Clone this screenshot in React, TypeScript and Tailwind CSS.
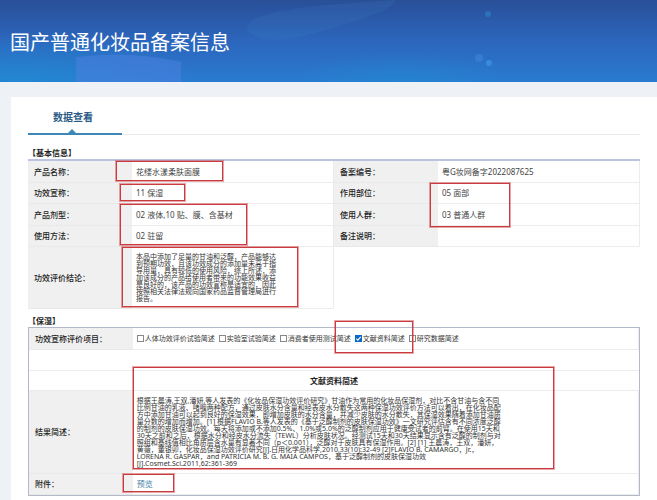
import type { ReactNode } from 'react';

interface MarkProps {
  className: string;
}

// Red annotation frame laid over a cell
function Mark({ className }: MarkProps) {
  return (
    <span
      aria-hidden="true"
      className={`pointer-events-none absolute z-10 border border-[#cb3a3e] ring-1 ring-[#cb3a3e]/45 ${className}`}
    />
  );
}

interface CellProps {
  children?: ReactNode;
}

function LabelCell({ children }: CellProps) {
  return (
    <th
      scope="row"
      className="border-b border-[#e9e9e9] bg-[#f0f0f0] pl-1.5 text-left align-middle font-medium text-[#222]"
    >
      {children}
    </th>
  );
}

function ValueCell({ children }: CellProps) {
  return (
    <td className="relative border-r border-b border-[#ececec] pl-1 align-middle text-[#444]">
      {children}
    </td>
  );
}

const methods = [
  { id: 'human', label: '人体功效评价试验简述', checked: false },
  { id: 'lab', label: '实验室试验简述', checked: false },
  { id: 'consumer', label: '消费者使用测试简述', checked: false },
  { id: 'literature', label: '文献资料简述', checked: true },
  { id: 'research', label: '研究数据简述', checked: false },
];

const conclusion = `本品中添加了足量的甘油和泛醇，产品能够达
到预期功效，且该功效成分的添加量未高于指
导用量，具有较低的使用风险，综上所述，添
加该成分的产品给使用者带来的功能效果收益
是良好的，该产品的功效宣称是适宜的，因此
按照相关法律法规向国家药品监督管理局进行
报告。`;

const summary = `根据王晨涛,王双,潘妍,等人发表的《化妆品保湿功效评价研究》甘油作为常用的化妆品保湿剂，对比不含甘油与含不同
比例甘油的乳液、啫喱两种配方，通过皮肤水分含量和经表皮水分散失这两种保湿功效评价方法可以看出，在化妆品配
方中添加甘油可以起到良好的保湿效果，即增加皮肤的水分含量，并减少皮肤的水分散失，其保湿效果随着添加甘油质
量分数的增加而增加。[1] 根据FLAVIO B.等人发表的《基于泛醇制剂的皮肤保湿功效》一文研究评估含有不同浓度泛醇
的制剂的皮肤保湿功效。每天将添加或不添加0.5%、1.0%或5.0%的泛醇制剂应用于健康受试者的前臂。在使用15天和
30天之前和之后，根据水分和经皮水分流失（TEWL）分析皮肤状况。经测试15天和30天结果显示含有泛醇的制剂与对
照组和基线值相比角质层含水量有显著不同（p＜0.001），泛醇对于皮肤具有保湿作用。[2] [1] 王晨涛，王双，潘妍，
黄薇，董银卯，化妆品保湿功效评价研究[J].日用化学品科学,2010,33(10):32-49 [2]FLAVIO B. CAMARGO，Jr.，
LORENA R. GASPAR，and PATRICIA M. B. G. MAIA CAMPOS，基于泛醇制剂的皮肤保湿功效
[J].Cosmet.Sci.2011,62:361-369`;

function LongText({ children }: CellProps) {
  return <p className="text-[7px] leading-[7px] whitespace-pre text-[#333]">{children}</p>;
}

function Banner() {
  return (
    <header className="relative flex h-[82px] items-center overflow-hidden bg-linear-to-b from-[#294f98] via-[#2c66bd] to-[#297bd0] pl-2.5">
      <svg
        className="absolute inset-0 h-full w-full"
        viewBox="0 0 657 82"
        preserveAspectRatio="none"
        aria-hidden="true"
      >
        <defs>
          <radialGradient id="glow">
            <stop offset="0" stopColor="#1f8fd4" stopOpacity="0.6" />
            <stop offset="1" stopColor="#1f8fd4" stopOpacity="0" />
          </radialGradient>
        </defs>
        <ellipse cx="20" cy="82" rx="180" ry="50" fill="url(#glow)" />
        <ellipse cx="400" cy="82" rx="110" ry="30" fill="url(#glow)" opacity="0.7" />
        <path d="M76 82V57Q130 50 181 62V82Z" fill="#4a80e0" opacity="0.55" />
        <path d="M247 28C248 12 300 6 395 0C400 8 350 24 300 37C275 43 250 40 247 28Z" fill="#4a90d0" opacity="0.12" />
        <circle cx="488" cy="14" r="3" fill="#2c83cc" opacity="0.6" />
        <circle cx="479" cy="58" r="4" fill="#3d8be0" opacity="0.5" />
        <circle cx="489" cy="63" r="3" fill="#3d95ea" opacity="0.7" />
      </svg>
      <h1 className="relative pt-1 text-[20px] leading-6 text-white">国产普通化妆品备案信息</h1>
    </header>
  );
}

function BasicInfo() {
  return (
    <section>
      <h2 className="pt-3 text-[8px] leading-3 font-bold text-[#222]">【基本信息】</h2>
      <table className="w-full table-fixed border-separate border-spacing-0 border-t-2 border-[#b9c5e0]">
        <colgroup>
          <col className="w-[17%]" />
          <col className="w-[33%]" />
          <col className="w-[17%]" />
          <col className="w-[33%]" />
        </colgroup>
        <tbody>
          <tr className="h-[22px]">
            <LabelCell>产品名称：</LabelCell>
            <ValueCell>
              花缕水漾柔肤面膜
              <Mark className="-left-4 top-0 h-5 w-[107px]" />
            </ValueCell>
            <LabelCell>备案编号：</LabelCell>
            <ValueCell>粤G妆网备字2022087625</ValueCell>
          </tr>
          <tr className="h-[21px]">
            <LabelCell>功效宣称：</LabelCell>
            <ValueCell>
              11 保湿
              <Mark className="-left-3 top-px h-[17px] w-[65px]" />
            </ValueCell>
            <LabelCell>作用部位：</LabelCell>
            <ValueCell>
              05 面部
              <Mark className="-left-2 top-0 h-11 w-20" />
            </ValueCell>
          </tr>
          <tr className="h-[22px]">
            <LabelCell>产品剂型：</LabelCell>
            <ValueCell>
              02 液体,10 贴、膜、含基材
              <Mark className="-left-3 top-0 h-[41px] w-[127px]" />
            </ValueCell>
            <LabelCell>使用人群：</LabelCell>
            <ValueCell>03 普通人群</ValueCell>
          </tr>
          <tr className="h-[21px]">
            <LabelCell>使用方法：</LabelCell>
            <ValueCell>02 驻留</ValueCell>
            <LabelCell>备注说明：</LabelCell>
            <ValueCell />
          </tr>
          <tr className="h-[62px]">
            <LabelCell>功效评价结论：</LabelCell>
            <ValueCell>
              <LongText>{conclusion}</LongText>
              <Mark className="-left-2.5 top-0 h-[60px] w-44" />
            </ValueCell>
            <td colSpan={2} />
          </tr>
        </tbody>
      </table>
    </section>
  );
}

function Moisturizing() {
  return (
    <section>
      <h2 className="pt-1.5 text-[8px] leading-3 font-bold text-[#222]">【保湿】</h2>
      <table className="w-full table-fixed border-separate border-spacing-0 border border-[#b4b9c9]">
        <colgroup>
          <col className="w-[17%]" />
          <col className="w-[83%]" />
        </colgroup>
        <tbody>
          <tr className="h-[22px]">
            <LabelCell>功效宣称评价项目：</LabelCell>
            <ValueCell>
              <div className="flex items-center gap-1 text-[7px] whitespace-nowrap text-[#333]">
                {methods.map((method) => (
                  <label key={method.id} htmlFor={method.id} className="relative flex items-center gap-px">
                    <input
                      id={method.id}
                      type="checkbox"
                      defaultChecked={method.checked}
                      className="size-[7px] appearance-none border border-[#888] bg-white checked:border-[#0b68c4] checked:bg-[#0b68c4]"
                    />
                    {method.checked && (
                      <svg viewBox="0 0 7 7" className="absolute left-0 size-[7px]" aria-hidden="true">
                        <path d="M1.3 3.6L2.9 5.1L5.7 1.9" fill="none" stroke="#fff" strokeWidth="1.1" />
                      </svg>
                    )}
                    {method.label}
                    {method.checked && <Mark className="-top-3 -right-2 -left-5 h-8" />}
                  </label>
                ))}
              </div>
            </ValueCell>
          </tr>
          <tr className="h-[21px]">
            <td colSpan={2} className="border-b border-[#ececec]" />
          </tr>
          <tr className="h-5">
            <th colSpan={2} className="border-b border-[#ececec] align-middle font-bold text-[#222]">
              文献资料简述
            </th>
          </tr>
          <tr className="h-[83px]">
            <LabelCell>结果简述：</LabelCell>
            <ValueCell>
              <LongText>{summary}</LongText>
              <Mark className="-top-6 left-0 h-[102px] w-[421px]" />
            </ValueCell>
          </tr>
          <tr className="h-[21px]">
            <LabelCell>附件：</LabelCell>
            <ValueCell>
              <a href="#preview" className="text-[#3f7fa8]">
                预览
              </a>
              <Mark className="top-0 -left-2.5 h-[18px] w-[51px]" />
            </ValueCell>
          </tr>
        </tbody>
      </table>
    </section>
  );
}

export default function App() {
  return (
    <div className="bg-[#eef2f7] font-['Noto_Sans','Noto_Sans_CJK_SC',sans-serif]">
      <Banner />
      <main className="pt-[15px] pl-[11px]">
        <div className="bg-white pr-[17px] pb-2 pl-[17px] text-[8px] leading-3">
          <nav className="flex border-b border-[#e8eaec] pt-3">
            <button
              type="button"
              className="relative -mb-px h-[26px] w-[94px] border-b-2 border-[#3d88b4] pr-1 pb-2 text-[10px] leading-4 font-bold text-[#2b5b86]"
            >
              数据查看
              <span className="absolute bottom-0 left-10 h-1 w-2 bg-[#3d88b4] [clip-path:polygon(50%_0,100%_100%,0_100%)]" />
            </button>
          </nav>
          <BasicInfo />
          <Moisturizing />
        </div>
      </main>
    </div>
  );
}
